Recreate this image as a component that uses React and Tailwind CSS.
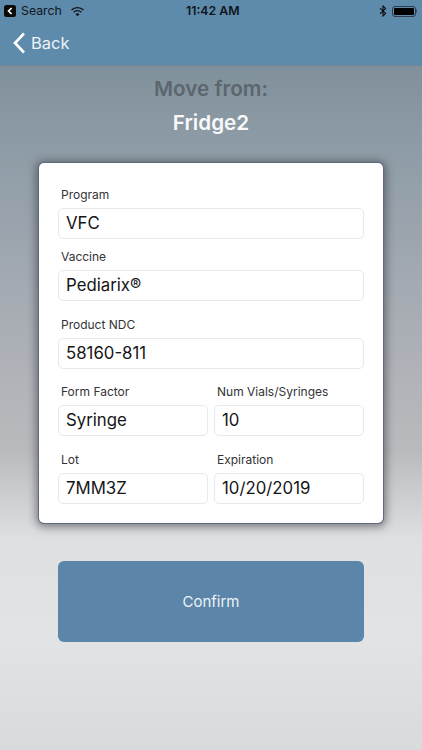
import React from "react";

const font = "font-['Inter','Liberation_Sans',sans-serif]";

function Field({ label, value, className = "" }) {
  return (
    <div className={`flex flex-col min-w-0 ${className}`}>
      <div className="h-[23px] pl-[3px] pb-[3px] flex items-center text-[12px] leading-none text-[#333336]">{label}</div>
      <div className="h-[31px] rounded-[5px] border border-[#e9e9eb] bg-white pl-[7px] flex items-center text-[16.8px] leading-none text-[#151517]">{value}</div>
    </div>
  );
}

function StatusBar() {
  return (
    <div className="h-[21px] pt-[1px] flex items-center justify-between px-[4px] text-[12.3px] text-[#10161c] relative">
      <div className="flex items-center gap-[4px]">
        <div className="w-[12px] h-[12px] rounded-[2.5px] bg-[#0b0b0b] flex items-center justify-center">
          <svg width="6" height="8" viewBox="0 0 6 8"><path d="M4.6 1 1.6 4l3 3" fill="none" stroke="#fff" strokeWidth="1.7" /></svg>
        </div>
        <span className="ml-[1px]">Search</span>
        <svg width="15" height="11" viewBox="0 0 16 12" className="ml-[4px]">
          <path d="M8 11.2 5.9 8.9a3 3 0 0 1 4.2 0Z" fill="#0b0f14" />
          <path d="M3.9 6.8a5.8 5.8 0 0 1 8.2 0" fill="none" stroke="#0b0f14" strokeWidth="1.5" />
          <path d="M1.5 4.4a9.2 9.2 0 0 1 13 0" fill="none" stroke="#0b0f14" strokeWidth="1.5" />
        </svg>
      </div>
      <div className="font-semibold absolute left-[186px]">11:42 AM</div>
      <div className="flex items-center gap-[5px] pr-[1px]">
        <svg width="8" height="12" viewBox="0 0 8 12"><path d="M1 3.2 6.6 8.6 4 11V1l2.6 2.4L1 8.8" fill="none" stroke="#0b0f14" strokeWidth="1.1" /></svg>
        <div className="flex items-center">
          <div className="w-[24px] h-[11px] rounded-[3px] border border-[#2c3c4a] p-[1px] flex">
            <div className="flex-1 bg-black rounded-[1px]" />
          </div>
          <div className="w-[1.5px] h-[4px] bg-[#3f5566] rounded-r-sm" />
        </div>
      </div>
    </div>
  );
}

export default function App() {
  return (
    <div className={`w-[422px] h-[750px] overflow-hidden flex flex-col ${font} bg-[linear-gradient(180deg,#768893_0%,#8e9ca7_20%,#a8adb4_42%,#b9babd_60%,#dfe0e2_72%,#e2e3e5_85%,#d9dadc_100%)]`}>
      <div className="h-[66px] bg-[#5e8aab] border-b border-[#6f8698] shrink-0">
        <StatusBar />
        <div className="h-[44px] flex items-center pl-[13px] gap-[5px] text-white">
          <svg width="13" height="22" viewBox="0 0 13 22" className="-mt-[1px]"><path d="M11 1.5 2 11l9 9.5" fill="none" stroke="#fff" strokeWidth="2.6" /></svg>
          <span className="text-[16.5px] font-normal text-[#eef3f7]">Back</span>
        </div>
      </div>

      <div className="h-[97px] shrink-0 flex flex-col items-center font-semibold text-[20.7px] leading-none">
        <div className="mt-[13px] text-[#5c666e]">Move from:</div>
        <div className="mt-[13px] text-[#f7f9fa]">Fridge2</div>
      </div>

      <div className="ml-[39px] w-[344px] h-[360px] shrink-0 bg-white rounded-[5px] shadow-[0_0_0_1px_#5f6a80,0_1px_9px_3px_rgba(50,50,55,0.55)] pt-[22px] px-[19px] flex flex-col">
        <Field label="Program" value="VFC" />
        <Field label="Vaccine" value="Pediarix®" className="mt-[8px]" />
        <Field label="Product NDC" value="58160-811" className="mt-[14px]" />
        <div className="mt-[13px] grid grid-cols-[150px_150px] gap-x-[6px]">
          <Field label="Form Factor" value="Syringe" />
          <Field label="Num Vials/Syringes" value="10" />
        </div>
        <div className="mt-[14px] grid grid-cols-[150px_150px] gap-x-[6px]">
          <Field label="Lot" value="7MM3Z" />
          <Field label="Expiration" value="10/20/2019" />
        </div>
      </div>

      <button className="mt-[38px] ml-[58px] w-[306px] h-[81px] pt-[1px] shrink-0 rounded-[6px] bg-[#5b86a9] text-[15px] text-[#edf2f6] flex items-center justify-center">Confirm</button>
    </div>
  );
}
